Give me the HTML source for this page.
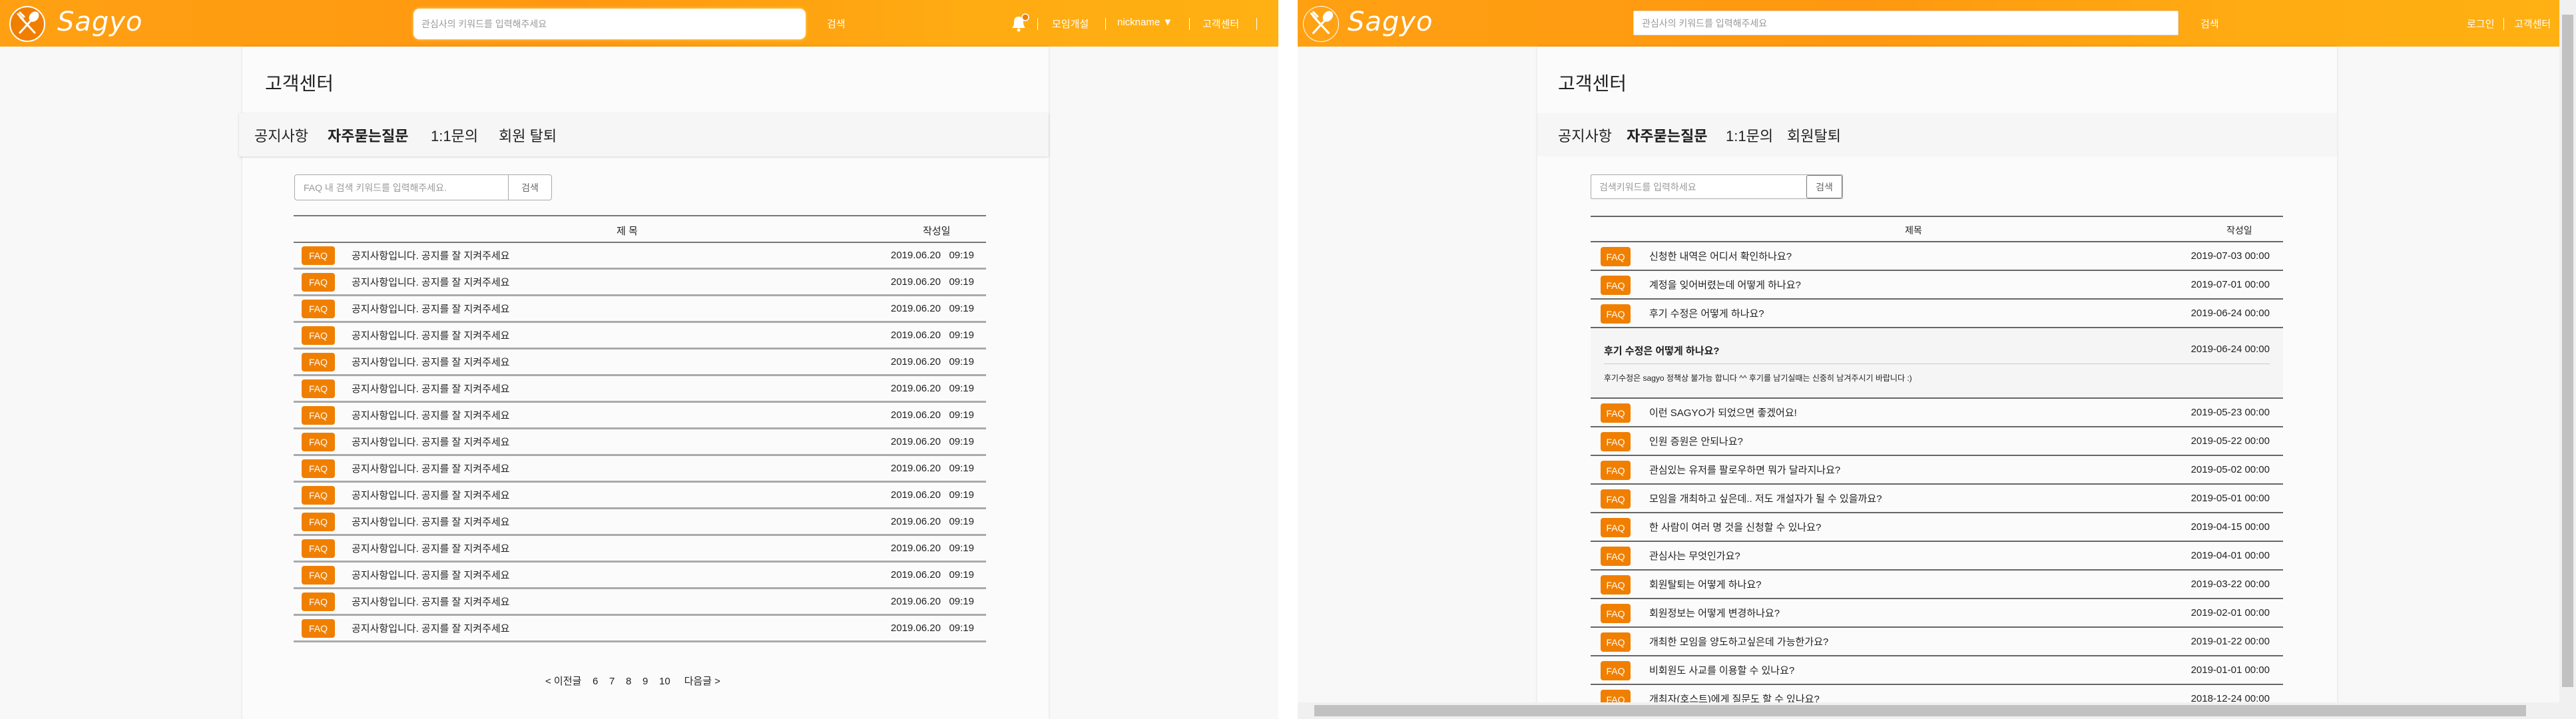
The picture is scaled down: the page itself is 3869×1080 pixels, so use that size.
<!DOCTYPE html>
<html><head><meta charset="utf-8">
<style>
*{box-sizing:border-box;margin:0;padding:0}
body{width:3869px;height:1080px;overflow:hidden;background:#fff;font-family:"Liberation Sans","Noto Sans CJK KR",sans-serif;color:#222;position:relative}
.win{position:absolute;top:0;height:1080px;background:#f8f8f8;overflow:hidden}
.hdr{position:absolute;left:0;top:0;height:70px;width:100%;background:linear-gradient(90deg,#ffa012 0%,#ff9810 45%,#ffab12 75%,#ffb012 100%)}
.logo{position:absolute;top:9px;width:54px;height:54px;border-radius:50%;background:#f07f00;border:2px solid #fff}
.logotxt{position:absolute;top:10px;color:#fff;font-size:40px;font-family:"DejaVu Sans",sans-serif;font-style:italic;letter-spacing:1px}
.srch{position:absolute;background:#fff;color:#999;font-size:14px;display:flex;align-items:center;padding-left:12px}
.w{color:#fff;position:absolute;font-size:15px}
.sep{position:absolute;width:1px;height:18px;background:#fff;top:27px}
.cont{position:absolute;top:70px;height:1010px;background:#fbfbfb;box-shadow:0 0 4px rgba(0,0,0,.12)}
.title{position:absolute;font-size:28px;color:#222}
.tabs{position:absolute;height:65px;background:#f6f6f6;box-shadow:0 1px 3px rgba(0,0,0,.15);font-size:22px;display:flex;align-items:center}
.tabs span{position:absolute}
.fs{position:absolute;border:1px solid #aaa;border-radius:4px;background:#fff;font-size:14px;color:#999;display:flex;align-items:center}
.fs .b{position:absolute;right:0;top:0;bottom:0;border-left:1px solid #aaa;display:flex;align-items:center;justify-content:center;color:#666}
.tbl{position:absolute;font-size:15px}
.th{position:relative;border-top:2px solid #777;border-bottom:2px solid #777}
.row{position:relative;display:flex;align-items:center}
.faq{position:absolute;background:#f07f00;color:#fff;border-radius:4px;display:flex;align-items:center;justify-content:center;font-size:14px}
.t{position:absolute}
.d{position:absolute;right:0}
</style></head><body>

<!-- LEFT WINDOW -->
<div class="win" style="left:0;width:1920px">
 <div class="hdr">
  <div class="logo" style="left:14px"><svg width="50" height="50" viewBox="0 0 50 50"><g stroke="#fff" stroke-width="3" stroke-linecap="round" fill="none"><line x1="14" y1="38" x2="34" y2="16"/><line x1="14" y1="14" x2="36" y2="38"/><ellipse cx="35" cy="14" rx="5" ry="7" fill="#fff" transform="rotate(40 35 14)"/><line x1="11" y1="10" x2="18" y2="17"/><line x1="14" y1="8" x2="20" y2="14"/></g></svg></div>
  <div class="logotxt" style="left:86px">Sagyo</div>
  <div class="srch" style="left:621px;top:13px;width:589px;height:46px;border-radius:9px;box-shadow:0 0 4px #ffe680">관심사의 키워드를 입력해주세요</div>
  <div class="w" style="left:1242px;top:25px">검색</div>
  <svg style="position:absolute;left:1514px;top:18px" width="34" height="34" viewBox="0 0 34 34"><path d="M6 24 Q9 21 9 15 Q9 7 16 7 Q23 7 23 15 Q23 21 26 24 Z" fill="#fff"/><circle cx="16" cy="27" r="2.5" fill="#fff"/><circle cx="26" cy="8" r="5" fill="#f07f00" stroke="#fff" stroke-width="1.5"/></svg>
  <div class="sep" style="left:1558px"></div>
  <div class="w" style="left:1580px;top:25px">모임개설</div>
  <div class="sep" style="left:1660px"></div>
  <div class="w" style="left:1678px;top:25px">nickname ▼</div>
  <div class="sep" style="left:1786px"></div>
  <div class="w" style="left:1806px;top:25px">고객센터</div>
  <div class="sep" style="left:1887px"></div>
 </div>
 <div class="cont" style="left:364px;width:1211px"></div>
 <div class="title" style="left:398px;top:104px">고객센터</div>
 <div class="tabs" style="left:359px;top:170px;width:1216px">
  <span style="left:23px">공지사항</span><span style="left:133px;font-weight:bold">자주묻는질문</span><span style="left:288px">1:1문의</span><span style="left:390px">회원 탈퇴</span>
 </div>
 <div class="fs" style="left:442px;top:262px;width:387px;height:39px;padding-left:13px">FAQ 내 검색 키워드를 입력해주세요.<div class="b" style="width:65px">검색</div></div>
 <div class="tbl" style="left:441px;top:323px;width:1040px">
  <div class="th" style="height:42px"><span class="t" style="left:485px;top:11px">제 목</span><span class="t" style="left:945px;top:11px">작성일</span></div>
  <div id="lrows">
  <div class="row" style="height:40px;border-bottom:3px solid #aaa"><div class="faq" style="left:12px;top:5px;width:50px;height:28px">FAQ</div><span class="t" style="left:87px">공지사항입니다. 공지를 잘 지켜주세요</span><span class="d" style="right:18px">2019.06.20&nbsp;&nbsp;&nbsp;09:19</span></div>
  <div class="row" style="height:40px;border-bottom:3px solid #aaa"><div class="faq" style="left:12px;top:5px;width:50px;height:28px">FAQ</div><span class="t" style="left:87px">공지사항입니다. 공지를 잘 지켜주세요</span><span class="d" style="right:18px">2019.06.20&nbsp;&nbsp;&nbsp;09:19</span></div>
  <div class="row" style="height:40px;border-bottom:3px solid #aaa"><div class="faq" style="left:12px;top:5px;width:50px;height:28px">FAQ</div><span class="t" style="left:87px">공지사항입니다. 공지를 잘 지켜주세요</span><span class="d" style="right:18px">2019.06.20&nbsp;&nbsp;&nbsp;09:19</span></div>
  <div class="row" style="height:40px;border-bottom:3px solid #aaa"><div class="faq" style="left:12px;top:5px;width:50px;height:28px">FAQ</div><span class="t" style="left:87px">공지사항입니다. 공지를 잘 지켜주세요</span><span class="d" style="right:18px">2019.06.20&nbsp;&nbsp;&nbsp;09:19</span></div>
  <div class="row" style="height:40px;border-bottom:3px solid #aaa"><div class="faq" style="left:12px;top:5px;width:50px;height:28px">FAQ</div><span class="t" style="left:87px">공지사항입니다. 공지를 잘 지켜주세요</span><span class="d" style="right:18px">2019.06.20&nbsp;&nbsp;&nbsp;09:19</span></div>
  <div class="row" style="height:40px;border-bottom:3px solid #aaa"><div class="faq" style="left:12px;top:5px;width:50px;height:28px">FAQ</div><span class="t" style="left:87px">공지사항입니다. 공지를 잘 지켜주세요</span><span class="d" style="right:18px">2019.06.20&nbsp;&nbsp;&nbsp;09:19</span></div>
  <div class="row" style="height:40px;border-bottom:3px solid #aaa"><div class="faq" style="left:12px;top:5px;width:50px;height:28px">FAQ</div><span class="t" style="left:87px">공지사항입니다. 공지를 잘 지켜주세요</span><span class="d" style="right:18px">2019.06.20&nbsp;&nbsp;&nbsp;09:19</span></div>
  <div class="row" style="height:40px;border-bottom:3px solid #aaa"><div class="faq" style="left:12px;top:5px;width:50px;height:28px">FAQ</div><span class="t" style="left:87px">공지사항입니다. 공지를 잘 지켜주세요</span><span class="d" style="right:18px">2019.06.20&nbsp;&nbsp;&nbsp;09:19</span></div>
  <div class="row" style="height:40px;border-bottom:3px solid #aaa"><div class="faq" style="left:12px;top:5px;width:50px;height:28px">FAQ</div><span class="t" style="left:87px">공지사항입니다. 공지를 잘 지켜주세요</span><span class="d" style="right:18px">2019.06.20&nbsp;&nbsp;&nbsp;09:19</span></div>
  <div class="row" style="height:40px;border-bottom:3px solid #aaa"><div class="faq" style="left:12px;top:5px;width:50px;height:28px">FAQ</div><span class="t" style="left:87px">공지사항입니다. 공지를 잘 지켜주세요</span><span class="d" style="right:18px">2019.06.20&nbsp;&nbsp;&nbsp;09:19</span></div>
  <div class="row" style="height:40px;border-bottom:3px solid #aaa"><div class="faq" style="left:12px;top:5px;width:50px;height:28px">FAQ</div><span class="t" style="left:87px">공지사항입니다. 공지를 잘 지켜주세요</span><span class="d" style="right:18px">2019.06.20&nbsp;&nbsp;&nbsp;09:19</span></div>
  <div class="row" style="height:40px;border-bottom:3px solid #aaa"><div class="faq" style="left:12px;top:5px;width:50px;height:28px">FAQ</div><span class="t" style="left:87px">공지사항입니다. 공지를 잘 지켜주세요</span><span class="d" style="right:18px">2019.06.20&nbsp;&nbsp;&nbsp;09:19</span></div>
  <div class="row" style="height:40px;border-bottom:3px solid #aaa"><div class="faq" style="left:12px;top:5px;width:50px;height:28px">FAQ</div><span class="t" style="left:87px">공지사항입니다. 공지를 잘 지켜주세요</span><span class="d" style="right:18px">2019.06.20&nbsp;&nbsp;&nbsp;09:19</span></div>
  <div class="row" style="height:40px;border-bottom:3px solid #aaa"><div class="faq" style="left:12px;top:5px;width:50px;height:28px">FAQ</div><span class="t" style="left:87px">공지사항입니다. 공지를 잘 지켜주세요</span><span class="d" style="right:18px">2019.06.20&nbsp;&nbsp;&nbsp;09:19</span></div>
  <div class="row" style="height:40px;border-bottom:3px solid #aaa"><div class="faq" style="left:12px;top:5px;width:50px;height:28px">FAQ</div><span class="t" style="left:87px">공지사항입니다. 공지를 잘 지켜주세요</span><span class="d" style="right:18px">2019.06.20&nbsp;&nbsp;&nbsp;09:19</span></div>
  </div>
 </div>
 <div style="position:absolute;left:819px;top:1012px;font-size:15px;word-spacing:0">&lt; 이전글&nbsp;&nbsp;&nbsp;&nbsp;6&nbsp;&nbsp;&nbsp;&nbsp;7&nbsp;&nbsp;&nbsp;&nbsp;8&nbsp;&nbsp;&nbsp;&nbsp;9&nbsp;&nbsp;&nbsp;&nbsp;10&nbsp;&nbsp;&nbsp;&nbsp;&nbsp;다음글 &gt;</div>
</div>

<!-- RIGHT WINDOW -->
<div class="win" style="left:1949px;width:1920px">
 <div class="hdr" style="width:1895px">
  <div class="logo" style="left:8px;background:#ffa214;border:1px solid #fff"><svg width="52" height="52" viewBox="0 0 50 50"><g stroke="#fff" stroke-width="3" stroke-linecap="round" fill="none"><line x1="14" y1="38" x2="34" y2="16"/><line x1="14" y1="14" x2="36" y2="38"/><ellipse cx="35" cy="14" rx="5" ry="7" fill="#fff" transform="rotate(40 35 14)"/><line x1="11" y1="10" x2="18" y2="17"/><line x1="14" y1="8" x2="20" y2="14"/></g></svg></div>
  <div class="logotxt" style="left:75px">Sagyo</div>
  <div class="srch" style="left:504px;top:16px;width:819px;height:37px;border-radius:2px;border:1px solid #ddd">관심사의 키워드를 입력해주세요</div>
  <div class="w" style="left:1356px;top:25px">검색</div>
  <div class="w" style="left:1756px;top:25px">로그인</div>
  <div class="sep" style="left:1811px"></div>
  <div class="w" style="left:1827px;top:25px">고객센터</div>
 </div>
 <div class="cont" style="left:360px;width:1201px"></div>
 <div class="title" style="left:391px;top:104px">고객센터</div>
 <div class="tabs" style="left:360px;top:170px;width:1201px;box-shadow:none">
  <span style="left:31px">공지사항</span><span style="left:134px;font-weight:bold">자주묻는질문</span><span style="left:283px">1:1문의</span><span style="left:375px">회원탈퇴</span>
 </div>
 <div class="fs" style="left:440px;top:262px;width:379px;height:37px;padding-left:12px;border-radius:2px">검색키워드를 입력하세요<div class="b" style="width:54px;border:1px solid #777;border-radius:3px">검색</div></div>
 <div class="tbl" style="left:440px;top:324px;width:1040px">
  <div class="th" style="height:40px;border-color:#666"><span class="t" style="left:472px;top:10px;font-size:14px">제목</span><span class="t" style="left:955px;top:10px;font-size:14px">작성일</span></div>
  <div class="row" style="height:43px;border-bottom:2px solid #666"><div class="faq" style="left:15px;top:7px;width:45px;height:29px">FAQ</div><span class="t" style="left:88px">신청한 내역은 어디서 확인하나요?</span><span class="d" style="right:20px">2019-07-03 00:00</span></div>
  <div class="row" style="height:43px;border-bottom:2px solid #666"><div class="faq" style="left:15px;top:7px;width:45px;height:29px">FAQ</div><span class="t" style="left:88px">계정을 잊어버렸는데 어떻게 하나요?</span><span class="d" style="right:20px">2019-07-01 00:00</span></div>
  <div class="row" style="height:43px;border-bottom:2px solid #666"><div class="faq" style="left:15px;top:7px;width:45px;height:29px">FAQ</div><span class="t" style="left:88px">후기 수정은 어떻게 하나요?</span><span class="d" style="right:20px">2019-06-24 00:00</span></div>
  <div style="position:relative;height:106px;background:#f5f5f5;border-bottom:2px solid #666">
   <span class="t" style="left:20px;top:23px;font-weight:bold">후기 수정은 어떻게 하나요?</span><span class="d" style="right:20px;top:23px">2019-06-24 00:00</span>
   <div style="position:absolute;left:20px;right:20px;top:53px;height:1px;background:#ccc"></div>
   <span class="t" style="left:20px;top:66px;font-size:12px">후기수정은 sagyo 정책상 불가능 합니다 ^^ 후기를 남기실때는 신중히 남겨주시기 바랍니다 :)</span>
  </div>
  <div class="row" style="height:43px;border-bottom:2px solid #666"><div class="faq" style="left:15px;top:7px;width:45px;height:29px">FAQ</div><span class="t" style="left:88px">이런 SAGYO가 되었으면 좋겠어요!</span><span class="d" style="right:20px">2019-05-23 00:00</span></div>
  <div class="row" style="height:43px;border-bottom:2px solid #666"><div class="faq" style="left:15px;top:7px;width:45px;height:29px">FAQ</div><span class="t" style="left:88px">인원 증원은 안되나요?</span><span class="d" style="right:20px">2019-05-22 00:00</span></div>
  <div class="row" style="height:43px;border-bottom:2px solid #666"><div class="faq" style="left:15px;top:7px;width:45px;height:29px">FAQ</div><span class="t" style="left:88px">관심있는 유저를 팔로우하면 뭐가 달라지나요?</span><span class="d" style="right:20px">2019-05-02 00:00</span></div>
  <div class="row" style="height:43px;border-bottom:2px solid #666"><div class="faq" style="left:15px;top:7px;width:45px;height:29px">FAQ</div><span class="t" style="left:88px">모임을 개최하고 싶은데.. 저도 개설자가 될 수 있을까요?</span><span class="d" style="right:20px">2019-05-01 00:00</span></div>
  <div class="row" style="height:43px;border-bottom:2px solid #666"><div class="faq" style="left:15px;top:7px;width:45px;height:29px">FAQ</div><span class="t" style="left:88px">한 사람이 여러 명 것을 신청할 수 있나요?</span><span class="d" style="right:20px">2019-04-15 00:00</span></div>
  <div class="row" style="height:43px;border-bottom:2px solid #666"><div class="faq" style="left:15px;top:7px;width:45px;height:29px">FAQ</div><span class="t" style="left:88px">관심사는 무엇인가요?</span><span class="d" style="right:20px">2019-04-01 00:00</span></div>
  <div class="row" style="height:43px;border-bottom:2px solid #666"><div class="faq" style="left:15px;top:7px;width:45px;height:29px">FAQ</div><span class="t" style="left:88px">회원탈퇴는 어떻게 하나요?</span><span class="d" style="right:20px">2019-03-22 00:00</span></div>
  <div class="row" style="height:43px;border-bottom:2px solid #666"><div class="faq" style="left:15px;top:7px;width:45px;height:29px">FAQ</div><span class="t" style="left:88px">회원정보는 어떻게 변경하나요?</span><span class="d" style="right:20px">2019-02-01 00:00</span></div>
  <div class="row" style="height:43px;border-bottom:2px solid #666"><div class="faq" style="left:15px;top:7px;width:45px;height:29px">FAQ</div><span class="t" style="left:88px">개최한 모임을 양도하고싶은데 가능한가요?</span><span class="d" style="right:20px">2019-01-22 00:00</span></div>
  <div class="row" style="height:43px;border-bottom:2px solid #666"><div class="faq" style="left:15px;top:7px;width:45px;height:29px">FAQ</div><span class="t" style="left:88px">비회원도 사교를 이용할 수 있나요?</span><span class="d" style="right:20px">2019-01-01 00:00</span></div>
  <div class="row" style="height:43px;border-bottom:2px solid #666"><div class="faq" style="left:15px;top:7px;width:45px;height:29px">FAQ</div><span class="t" style="left:88px">개최자(호스트)에게 질문도 할 수 있나요?</span><span class="d" style="right:20px">2018-12-24 00:00</span></div>
 </div>
 <!-- scrollbars -->
 <div style="position:absolute;left:1895px;top:0;width:25px;height:1055px;background:#f0f0f0"><div style="position:absolute;left:4px;top:22px;width:17px;height:1010px;background:#c1c1c1"></div></div>
 <div style="position:absolute;left:0;top:1055px;width:1920px;height:25px;background:#f0f0f0"><div style="position:absolute;left:25px;top:4px;width:1820px;height:17px;background:#c1c1c1"></div></div>
</div>
</body></html>
